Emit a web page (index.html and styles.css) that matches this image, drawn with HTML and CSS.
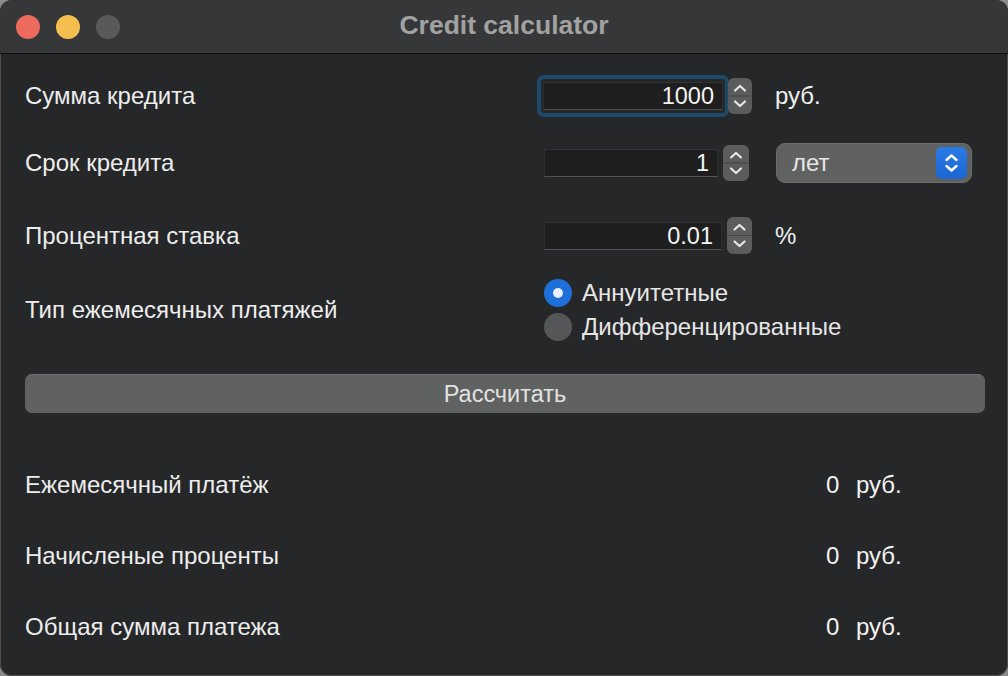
FILE: index.html
```html
<!DOCTYPE html>
<html lang="ru">
<head>
<meta charset="utf-8">
<title>Credit calculator</title>
<link rel="stylesheet" href="styles.css">
</head>
<body>
<div class="window">
  <div class="titlebar">
    <div class="lights">
      <span class="light red"></span>
      <span class="light yellow"></span>
      <span class="light gray"></span>
    </div>
    <div class="title">Credit calculator</div>
    <div></div>
  </div>
  <div class="content">
    <div class="row row1">
      <div class="label">Сумма кредита</div>
      <div class="controls">
        <div class="ring"><div class="field w180">1000</div></div>
        <div class="stepper s1">
          <svg viewBox="0 0 24 36" width="24" height="36"><path d="M7 12.5 L12 8 L17 12.5" /><line class="div" x1="0" y1="18" x2="24" y2="18"/><path d="M7 23.5 L12 28 L17 23.5" /></svg>
        </div>
        <div class="unit">руб.</div>
      </div>
    </div>
    <div class="row row2">
      <div class="label">Срок кредита</div>
      <div class="controls indent">
        <div class="field w174">1</div>
        <div class="stepper s2">
          <svg viewBox="0 0 26 36" width="26" height="36"><path d="M8 12.5 L13 8 L18 12.5" /><line class="div" x1="0" y1="18" x2="26" y2="18"/><path d="M8 23.5 L13 28 L18 23.5" /></svg>
        </div>
        <div class="select">
          <span class="select-text">лет</span>
          <span class="select-btn">
            <svg viewBox="0 0 31 32" width="31" height="32"><path d="M10.5 13 L15.5 8.5 L20.5 13" /><path d="M10.5 19 L15.5 23.5 L20.5 19" /></svg>
          </span>
        </div>
      </div>
    </div>
    <div class="row row3">
      <div class="label">Процентная ставка</div>
      <div class="controls indent">
        <div class="field w178">0.01</div>
        <div class="stepper s3">
          <svg viewBox="0 0 25 37" width="25" height="37"><path d="M7.5 12.5 L12.5 8 L17.5 12.5" /><line class="div" x1="0" y1="18.5" x2="25" y2="18.5"/><path d="M7.5 24.5 L12.5 29 L17.5 24.5" /></svg>
        </div>
        <div class="unit">%</div>
      </div>
    </div>
    <div class="row row4">
      <div class="label">Тип ежемесячных платяжей</div>
      <div class="radios indent">
        <div class="radio-item"><span class="radio on"></span><span class="radio-label">Аннуитетные</span></div>
        <div class="radio-item"><span class="radio"></span><span class="radio-label">Дифференцированные</span></div>
      </div>
    </div>
    <button class="calc">Рассчитать</button>
    <div class="results">
      <div class="res-row"><div class="label">Ежемесячный платёж</div><div class="num">0</div><div class="cur">руб.</div></div>
      <div class="res-row"><div class="label">Начисленые проценты</div><div class="num">0</div><div class="cur">руб.</div></div>
      <div class="res-row"><div class="label">Общая сумма платежа</div><div class="num">0</div><div class="cur">руб.</div></div>
    </div>
  </div>
</div>
</body>
</html>
```
FILE: styles.css
```css
html, body {
  margin: 0;
  padding: 0;
  background: #8c8c8c;
}
body {
  font-family: "Liberation Sans", Arial, "Helvetica", sans-serif;
  color: #ececec;
}
.window {
  width: 1008px;
  height: 676px;
  box-sizing: border-box;
  border-radius: 12px;
  overflow: hidden;
  background: #262729;
  box-shadow: inset 0 0 0 1px #4d4e50;
  display: flex;
  flex-direction: column;
}
.titlebar {
  height: 53px;
  flex: none;
  background: #363738;
  border-bottom: 1px solid #0c0c0c;
  display: grid;
  grid-template-columns: 1fr auto 1fr;
  align-items: center;
}
.lights {
  display: flex;
  gap: 16px;
  padding-left: 16px;
}
.light {
  width: 24px;
  height: 24px;
  border-radius: 50%;
  display: block;
}
.light.red { background: #ec6a5e; }
.light.yellow { background: #f4bf4f; }
.light.gray { background: #58595b; }
.title {
  font-size: 26.5px;
  font-weight: bold;
  color: #a2a2a2;
  margin-top: -2px;
}
.content {
  padding: 21px 0 0 25px;
  display: flex;
  flex-direction: column;
}
.row {
  display: flex;
  align-items: center;
}
.label {
  font-size: 24px;
  color: #ededed;
}
.row .label {
  width: 512px;
  flex: none;
}
.row1 { height: 42px; }
.row2 { height: 40px; margin-top: 26px; }
.row3 { height: 37px; margin-top: 34px; }
.row4 { height: 68px; margin-top: 22px; }
.controls {
  display: flex;
  align-items: center;
}
.indent { margin-left: 7px; }
.ring {
  border: 4px solid #1b4a6a;
  border-radius: 7px;
  padding: 3px 2px;
}
.field {
  height: 28px;
  box-sizing: border-box;
  background: #1e1e1f;
  border-top: 1px solid #333436;
  border-left: 1px solid #2d2e30;
  border-right: 1px solid #2d2e30;
  border-bottom: 1px solid #525355;
  color: #f4f4f4;
  font-size: 23.5px;
  line-height: 26px;
  text-align: right;
  padding-right: 8px;
}
.w180 { width: 180px; }
.w174 { width: 174px; }
.w178 { width: 178px; }
.stepper {
  background: #5b5c5e;
  border-radius: 6px;
  display: flex;
}
.stepper svg path {
  fill: none;
  stroke: #e8e8e8;
  stroke-width: 2.2;
  stroke-linecap: round;
  stroke-linejoin: round;
}
.stepper svg .div {
  stroke: #434446;
  stroke-width: 1;
}
.s1 { margin-left: -1px; width: 24px; height: 36px; }
.s2 { margin-left: 5px; width: 26px; height: 36px; }
.s3 { margin-left: 5px; width: 25px; height: 37px; }
.unit {
  font-size: 24px;
  margin-left: 23px;
  color: #f0f0f0;
}
.select {
  margin-left: 27px;
  width: 196px;
  height: 40px;
  box-sizing: border-box;
  background: #606161;
  border: 1px solid #6b6c6c;
  border-radius: 9px;
  display: flex;
  align-items: center;
  justify-content: space-between;
  padding: 0 4px 0 15px;
}
.select-text {
  font-size: 24px;
  color: #e6e6e6;
}
.select-btn {
  width: 31px;
  height: 32px;
  border-radius: 6px;
  background: linear-gradient(#2a7ae6, #1a66d2);
  display: flex;
}
.select-btn svg path {
  fill: none;
  stroke: #ffffff;
  stroke-width: 2.4;
  stroke-linecap: round;
  stroke-linejoin: round;
}
.radios {
  display: flex;
  flex-direction: column;
}
.radio-item {
  display: flex;
  align-items: center;
  height: 34px;
}
.radio {
  width: 28px;
  height: 28px;
  border-radius: 50%;
  background: #555658;
  box-sizing: border-box;
  display: flex;
  align-items: center;
  justify-content: center;
}
.radio.on {
  background: #1e6fd9;
}
.radio.on::after {
  content: "";
  width: 10px;
  height: 10px;
  border-radius: 50%;
  background: #e8f0ff;
}
.radio-label {
  margin-left: 10px;
  font-size: 24px;
  color: #e6e6e6;
}
.calc {
  margin-top: 30px;
  width: 960px;
  height: 39px;
  background: #606161;
  border: none;
  border-top: 1px solid #707171;
  border-radius: 7px;
  color: #e2e2e2;
  font-family: "Liberation Sans", Arial, sans-serif;
  font-size: 23.5px;
  padding: 0;
}
.results {
  margin-top: 57px;
  display: flex;
  flex-direction: column;
  gap: 41px;
}
.res-row {
  display: flex;
  align-items: center;
  height: 30px;
}
.res-row .label {
  width: 801px;
  flex: none;
}
.num {
  font-size: 24px;
  color: #f2f2f2;
  width: 30px;
}
.cur {
  font-size: 24px;
  color: #f2f2f2;
}
```
